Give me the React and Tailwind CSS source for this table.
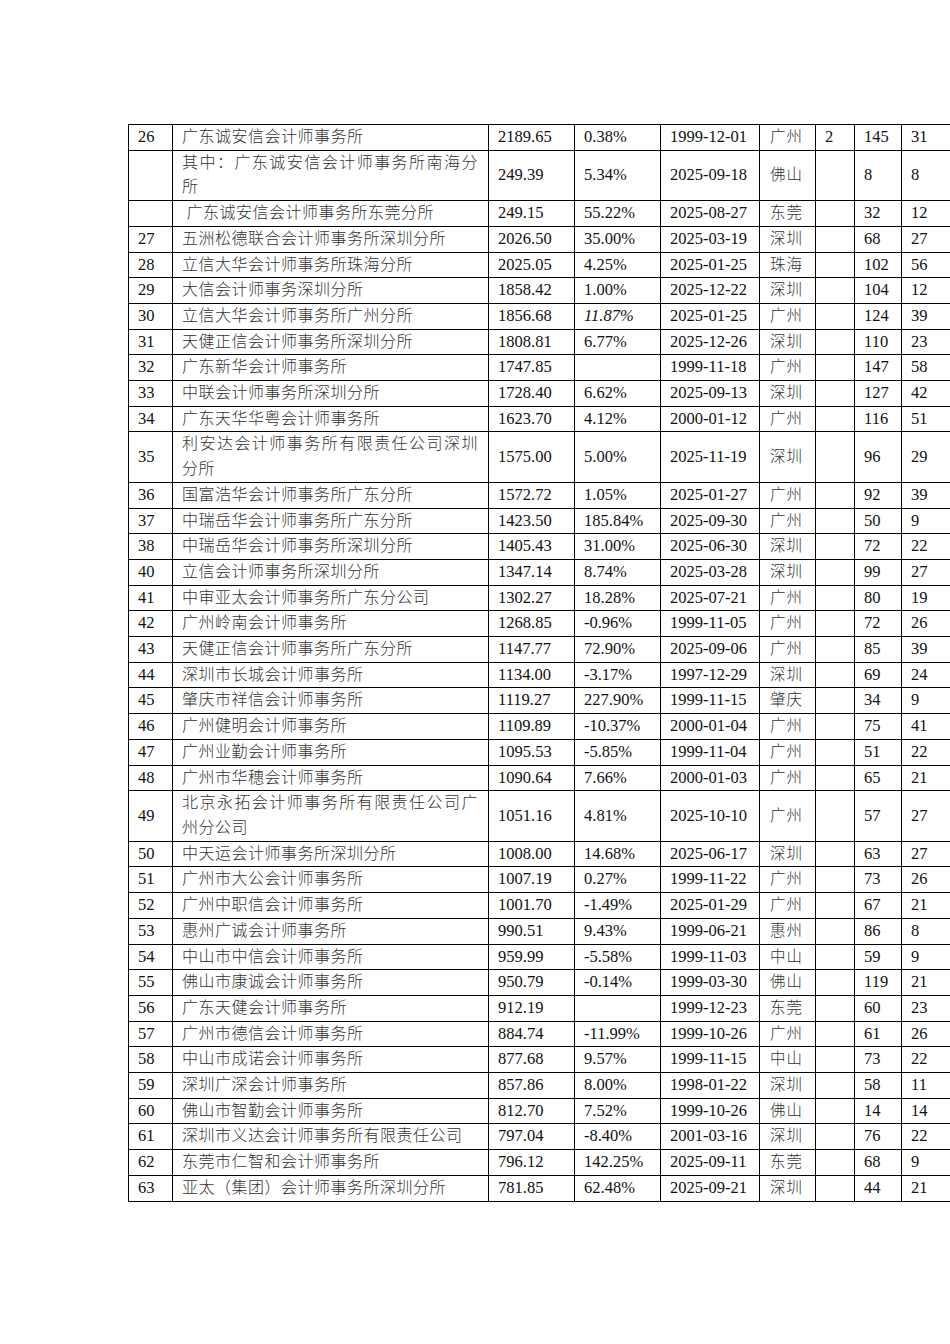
const rows = [
  ["26", "广东诚安信会计师事务所", "2189.65", "0.38%", "1999-12-01", "广州", "2", "145", "31"],
  ["", ["其中：广东诚安信会计师事务所南海分", "所"], "249.39", "5.34%", "2025-09-18", "佛山", "", "8", "8"],
  ["", "\u00a0广东诚安信会计师事务所东莞分所", "249.15", "55.22%", "2025-08-27", "东莞", "", "32", "12"],
  ["27", "五洲松德联合会计师事务所深圳分所", "2026.50", "35.00%", "2025-03-19", "深圳", "", "68", "27"],
  ["28", "立信大华会计师事务所珠海分所", "2025.05", "4.25%", "2025-01-25", "珠海", "", "102", "56"],
  ["29", "大信会计师事务深圳分所", "1858.42", "1.00%", "2025-12-22", "深圳", "", "104", "12"],
  ["30", "立信大华会计师事务所广州分所", "1856.68", "11.87%", "2025-01-25", "广州", "", "124", "39", true],
  ["31", "天健正信会计师事务所深圳分所", "1808.81", "6.77%", "2025-12-26", "深圳", "", "110", "23"],
  ["32", "广东新华会计师事务所", "1747.85", "", "1999-11-18", "广州", "", "147", "58"],
  ["33", "中联会计师事务所深圳分所", "1728.40", "6.62%", "2025-09-13", "深圳", "", "127", "42"],
  ["34", "广东天华华粤会计师事务所", "1623.70", "4.12%", "2000-01-12", "广州", "", "116", "51"],
  ["35", ["利安达会计师事务所有限责任公司深圳", "分所"], "1575.00", "5.00%", "2025-11-19", "深圳", "", "96", "29"],
  ["36", "国富浩华会计师事务所广东分所", "1572.72", "1.05%", "2025-01-27", "广州", "", "92", "39"],
  ["37", "中瑞岳华会计师事务所广东分所", "1423.50", "185.84%", "2025-09-30", "广州", "", "50", "9"],
  ["38", "中瑞岳华会计师事务所深圳分所", "1405.43", "31.00%", "2025-06-30", "深圳", "", "72", "22"],
  ["40", "立信会计师事务所深圳分所", "1347.14", "8.74%", "2025-03-28", "深圳", "", "99", "27"],
  ["41", "中审亚太会计师事务所广东分公司", "1302.27", "18.28%", "2025-07-21", "广州", "", "80", "19"],
  ["42", "广州岭南会计师事务所", "1268.85", "-0.96%", "1999-11-05", "广州", "", "72", "26"],
  ["43", "天健正信会计师事务所广东分所", "1147.77", "72.90%", "2025-09-06", "广州", "", "85", "39"],
  ["44", "深圳市长城会计师事务所", "1134.00", "-3.17%", "1997-12-29", "深圳", "", "69", "24"],
  ["45", "肇庆市祥信会计师事务所", "1119.27", "227.90%", "1999-11-15", "肇庆", "", "34", "9"],
  ["46", "广州健明会计师事务所", "1109.89", "-10.37%", "2000-01-04", "广州", "", "75", "41"],
  ["47", "广州业勤会计师事务所", "1095.53", "-5.85%", "1999-11-04", "广州", "", "51", "22"],
  ["48", "广州市华穗会计师事务所", "1090.64", "7.66%", "2000-01-03", "广州", "", "65", "21"],
  ["49", ["北京永拓会计师事务所有限责任公司广", "州分公司"], "1051.16", "4.81%", "2025-10-10", "广州", "", "57", "27"],
  ["50", "中天运会计师事务所深圳分所", "1008.00", "14.68%", "2025-06-17", "深圳", "", "63", "27"],
  ["51", "广州市大公会计师事务所", "1007.19", "0.27%", "1999-11-22", "广州", "", "73", "26"],
  ["52", "广州中职信会计师事务所", "1001.70", "-1.49%", "2025-01-29", "广州", "", "67", "21"],
  ["53", "惠州广诚会计师事务所", "990.51", "9.43%", "1999-06-21", "惠州", "", "86", "8"],
  ["54", "中山市中信会计师事务所", "959.99", "-5.58%", "1999-11-03", "中山", "", "59", "9"],
  ["55", "佛山市康诚会计师事务所", "950.79", "-0.14%", "1999-03-30", "佛山", "", "119", "21"],
  ["56", "广东天健会计师事务所", "912.19", "", "1999-12-23", "东莞", "", "60", "23"],
  ["57", "广州市德信会计师事务所", "884.74", "-11.99%", "1999-10-26", "广州", "", "61", "26"],
  ["58", "中山市成诺会计师事务所", "877.68", "9.57%", "1999-11-15", "中山", "", "73", "22"],
  ["59", "深圳广深会计师事务所", "857.86", "8.00%", "1998-01-22", "深圳", "", "58", "11"],
  ["60", "佛山市智勤会计师事务所", "812.70", "7.52%", "1999-10-26", "佛山", "", "14", "14"],
  ["61", "深圳市义达会计师事务所有限责任公司", "797.04", "-8.40%", "2001-03-16", "深圳", "", "76", "22"],
  ["62", "东莞市仁智和会计师事务所", "796.12", "142.25%", "2025-09-11", "东莞", "", "68", "9"],
  ["63", "亚太（集团）会计师事务所深圳分所", "781.85", "62.48%", "2025-09-21", "深圳", "", "44", "21"],
];

const widths = [44, 316, 86, 86, 99, 56, 39, 47, 52];

function NameCell({ name }) {
  // two-line names: first line is spread edge to edge like in the Word table
  if (Array.isArray(name)) {
    return (
      <>
        <div className="[text-align-last:justify] whitespace-nowrap">{name[0]}</div>
        <div className="whitespace-nowrap">{name[1]}</div>
      </>
    );
  }
  return <span className="whitespace-pre">{name}</span>;
}

export default function App() {
  return (
    <div className="w-[950px] h-[1344px] overflow-hidden bg-white pt-[124px] pl-[128px] text-[#111] font-['Liberation_Serif','Noto_Sans_CJK_SC',serif] text-[16.5px] leading-[24.7px]">
      <table className="table-fixed border-collapse w-[825px]">
        <colgroup>
          {widths.map((w, i) => (
            <col key={i} style={{ width: w }} />
          ))}
        </colgroup>
        <tbody>
          {rows.map((r, i) => (
            <tr key={i}>
              {r.slice(0, 9).map((c, j) => (
                <td
                  key={j}
                  className={
                    "border border-black align-middle py-0 whitespace-nowrap " +
                    (j === 1
                      ? "pl-[9px] pr-[10px] text-[16px] tracking-[0.5px] font-light text-[#333] "
                      : j === 5
                      ? "pl-[10px] pr-0 text-[15.5px] tracking-[1px] font-light text-[#333] "
                      : "pl-[9px] pr-0 ") +
                    (j === 3 && r[9] ? "italic " : "")
                  }
                >
                  {j === 1 ? <NameCell name={c} /> : c}
                </td>
              ))}
            </tr>
          ))}
        </tbody>
      </table>
    </div>
  );
}
